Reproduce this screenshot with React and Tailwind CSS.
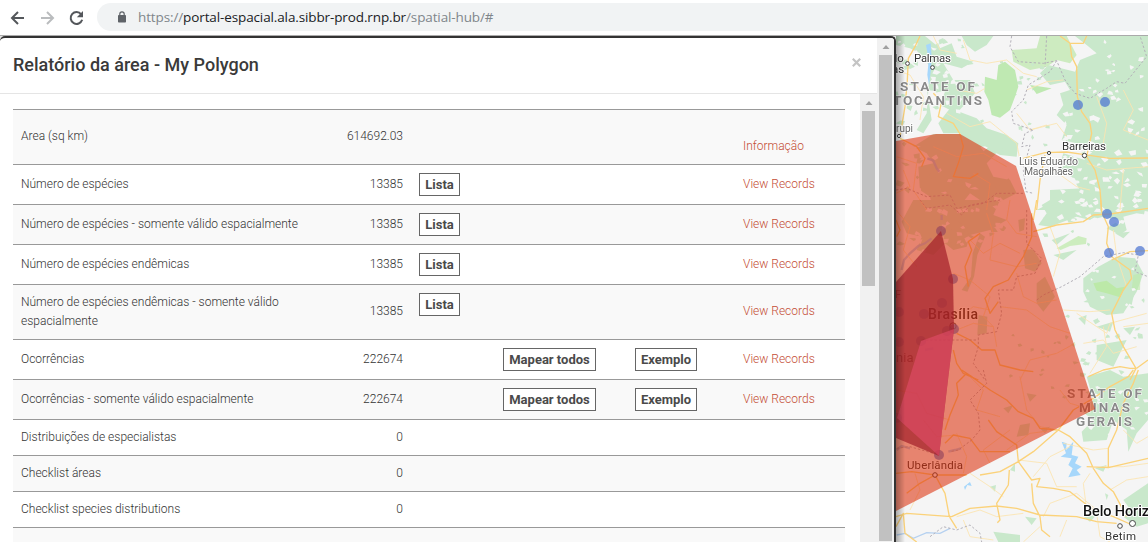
import React from "react";

const rows = [
  { label: "Area (sq km)", value: "614692.03", h: "h-[55px]", link: "Informação", labelPad: "pb-[2px]", valuePad: "pb-[2px]", linkPad: "pt-[19px]", shade: true },
  { label: "Número de espécies", value: "13385", h: "h-[40px]", list: true, link: "View Records" },
  { label: "Número de espécies - somente válido espacialmente", value: "13385", h: "h-[40px]", list: true, link: "View Records", shade: true },
  { label: "Número de espécies endêmicas", value: "13385", h: "h-[40px]", list: true, link: "View Records" },
  { label: "Número de espécies endêmicas - somente válido espacialmente", value: "13385", h: "h-[55px]", list: true, link: "View Records", valuePad: "pb-[2px]", linkPad: "pb-[2px]", shade: true },
  { label: "Ocorrências", value: "222674", h: "h-[40px]", map: true, link: "View Records" },
  { label: "Ocorrências - somente válido espacialmente", value: "222674", h: "h-[40px]", map: true, link: "View Records", shade: true },
  { label: "Distribuições de especialistas", value: "0", h: "h-[36px]" },
  { label: "Checklist áreas", value: "0", h: "h-[36px]", shade: true },
  { label: "Checklist species distributions", value: "0", h: "h-[36px]" },
  { label: "", value: "", h: "h-[36px]", shade: true },
];

function Btn({ children, className }) {
  return (
    <button className={`mt-[8px] h-[23px] shrink-0 self-start border border-[#666] bg-white text-center text-[13px] leading-[21px] font-bold whitespace-nowrap text-[#4a4a4a] ${className}`}>
      {children}
    </button>
  );
}

function Row({ row }) {
  return (
    <div className={`flex shrink-0 items-center border-t border-[#999] text-[12px] leading-[19px] font-light text-[#333] ${row.h} ${row.shade ? "bg-[#f9f9f9]" : "bg-white"}`}>
      <div className={`w-[302px] shrink-0 pr-[16px] pl-[8px] ${row.labelPad || ""}`}>{row.label}</div>
      <div className={`w-[88px] shrink-0 text-right ${row.valuePad || ""}`}>{row.value}</div>
      <div className="flex w-[100px] shrink-0 self-stretch pl-[16px]">
        {row.list && <Btn className="w-[41px]">Lista</Btn>}
      </div>
      <div className="flex w-[132px] shrink-0 self-stretch">
        {row.map && <Btn className="w-[93px]">Mapear todos</Btn>}
      </div>
      <div className="flex w-[108px] shrink-0 self-stretch">
        {row.map && <Btn className="w-[62px]">Exemplo</Btn>}
      </div>
      <div className={`whitespace-nowrap text-[#c44d34] ${row.linkPad || ""}`}>{row.link}</div>
    </div>
  );
}

function Arrow() {
  return (
    <svg width="8" height="4" viewBox="0 0 8 4" className="shrink-0">
      <path d="M0.5 4 L4 0 L7.5 4 Z" fill="#a0a0a0" />
    </svg>
  );
}

function random(seed) {
  let s = seed;
  return () => {
    s = (s * 16807) % 2147483647;
    return s / 2147483647;
  };
}

// Scatters small irregular patches of vegetation or clearing inside a box.
function shards(seed, n, x, y, w, h, size) {
  const r = random(seed);
  let d = "";
  for (let i = 0; i < n; i++) {
    const cx = x + r() * w;
    const cy = y + r() * h;
    const a = r() * 6.28;
    const pts = [0, 1.5, 2.8, 4.3].map((t) => {
      const q = size * (0.35 + r());
      return `${(cx + Math.cos(a + t) * q).toFixed(1)} ${(cy + Math.sin(a + t) * q * 0.75).toFixed(1)}`;
    });
    d += `M${pts.join("L")}Z`;
  }
  return d;
}

const NORTH = "translate(890 30) scale(0.33333)";
const MID = "translate(890 200) scale(0.33333)";
const SOUTH = "translate(890 370) scale(0.33333)";

function Place({ x, y, r = 1.9 }) {
  return <circle cx={x} cy={y} r={r} fill="#fff" stroke="#444" strokeWidth="1" />;
}

function MapView() {
  return (
    <svg className="block h-[506px] w-[252px]" viewBox="896 36 252 506" fontFamily="Roboto, sans-serif">
      <defs>
        <linearGradient id="edge" x1="0" x2="1">
          <stop offset="0" stopColor="#000" stopOpacity="0.3" />
          <stop offset="1" stopColor="#000" stopOpacity="0" />
        </linearGradient>
      </defs>
      <rect x="896" y="36" width="252" height="506" fill="#f5f5f5" />

      <g fill="#c9e8cb">
        <g transform={NORTH}>
          <path d="M18 18H105L150 55L185 40L200 80L250 95L215 115L160 100L190 150L240 150L255 190L200 250L150 225L165 185L110 175L125 270L100 310L80 300L110 250L120 110L90 70L60 55L18 45Z" />
          <path d="M215 18H310L290 45L255 65L230 45Z" />
          <path d="M555 18H774V540H650L615 500L570 480L545 440L505 420L520 370L585 390L560 340L515 330L530 285L500 255L520 225L510 190L540 180L525 155L480 165L450 130L475 105L555 125L570 90L620 70L590 45Z" />
          <path d="M450 18H530L560 75L540 100L500 90L470 110L420 120L370 95L365 60L440 55Z" fill="#cdebc0" />
          <path d="M180 235L260 265L290 295L350 315L385 340L380 380L330 375L270 345L210 310L160 310L145 280Z" />
          <path d="M130 312H220L320 368L290 400L310 440L360 450L380 490L300 530L240 490L200 540L130 540L120 500L90 480L85 410L130 400L110 370L70 350Z" />
          <path d="M480 480L580 475L620 500L570 540H440L480 520Z" />
        </g>
        <g transform={MID}>
          <path d="M480 0H774V45L740 40L700 50L710 90L690 105L650 85L690 60L640 50L600 60L560 50L480 80L445 75L470 40L455 15Z" />
          <path d="M580 235L625 200L680 170L735 175L760 220L740 275L700 340L650 345L600 320L580 275Z" />
          <path d="M70 0H330L310 45L350 60L300 90L240 105L230 140L190 150L165 130L130 165L80 150L95 110L50 100L35 65Z" />
          <path d="M270 100L285 110L262 165L252 230L232 275L215 270L243 230L248 160Z" />
          <path d="M400 150L430 148L455 190L435 215L405 205Z" />
          <path d="M440 250L465 230L495 290L460 335L440 310Z" />
          <path d="M265 345L292 350L290 400L262 405Z" />
          <path d="M385 60L405 55L402 90L388 95Z" />
          <path d="M700 300L735 270L725 315Z M620 435L710 420L690 460L670 500L620 480Z" />
          <path d="M620 380L670 365L660 395Z M700 385L735 380L720 405Z M565 355L590 345L585 375Z" />
          <path d="M485 120L540 100L500 135Z M490 165L560 150L520 180Z M675 100L720 95L700 115Z" />
        </g>
        <g transform={SOUTH}>
          <path d="M590 20L660 0L700 20L774 10V150L740 190L715 245L710 180L670 150L650 210L580 215L575 185L610 150L570 120L610 90Z" />
          <path d="M340 115L370 105L355 130Z M390 165L420 160L415 195L380 200Z M410 70L440 75L420 95Z" />
          <path d="M700 390L774 340V460L740 470L700 440L715 410Z M405 440L440 445L425 465Z M580 440L620 435L600 455Z M310 485L390 495V516H325Z M300 350L318 345L315 365Z M360 300L375 280L375 305Z M645 370L655 375L650 390Z M615 295L650 285L640 305Z M450 175L480 170L465 190Z" />
        </g>
        <path d={shards(17, 34, 896, 40, 70, 90, 4)} />
        <path d={shards(29, 34, 960, 60, 90, 100, 3)} />
        <path d={shards(41, 30, 900, 140, 110, 110, 4)} />
        <path d={shards(53, 30, 1065, 300, 80, 100, 3.2)} />
        <path d={shards(59, 12, 1010, 330, 60, 60, 2.5)} />
        <path d={shards(67, 14, 1045, 195, 50, 50, 3.5)} />
      </g>
      <g transform={NORTH} fill="#bfe9b2">
        <path d="M285 140L320 150L325 105L345 95L375 120L385 170L375 200L360 240L330 263L305 255L295 210L283 185Z" />
        <path d="M420 165L485 175L440 192Z" />
      </g>
      <g transform={MID} fill="#bce9a8">
        <path d="M500 145L565 108L590 115L588 132L540 138L512 150Z" opacity="0.7" />
        <path d="M610 250L650 242L680 265L705 260L690 292L650 280L620 272Z" />
        <path d="M730 225L752 220L750 270L725 270Z" opacity="0.6" />
      </g>
      <g fill="#f5f5f5">
        <path d={shards(7, 60, 1062, 110, 86, 100, 3.8)} />
        <path d={shards(11, 22, 1075, 42, 70, 60, 3)} />
        <path d={shards(13, 22, 1060, 200, 88, 24, 3.5)} />
        <path d={shards(23, 34, 900, 40, 60, 75, 3.5)} />
        <path d={shards(31, 44, 912, 140, 95, 115, 3.8)} />
        <path d={shards(37, 18, 1090, 380, 58, 55, 3.2)} />
        <path d={shards(43, 9, 1088, 262, 50, 45, 2.6)} />
      </g>

      <g fill="#a6d7fb">
        <path transform={NORTH} d="M122 40L125 85L122 125L117 165L112 135L116 90L108 45Z" />
        <path transform={SOUTH} d="M515 215L530 220L528 240L550 215L545 255L565 260L555 280L575 290L560 300L572 315L535 322L548 295L535 285L545 265L512 260L528 250ZM222 350L240 336L245 348L232 345L225 360Z" />
      </g>
      <g fill="none" stroke="#a6c8ef" strokeWidth="7" opacity="0.8">
        <path transform={NORTH} d="M112 385L130 392L140 415L148 425" />
        <path transform={MID} d="M155 45V60M125 115L105 130L85 138L60 160L42 180L35 210M105 450L130 445" />
        <path transform={SOUTH} d="M20 240L35 228L60 235M175 245L195 240L213 235" />
        <path transform={SOUTH} d="M20 495L45 490L70 505L110 488L150 490L180 475" strokeWidth="4" />
      </g>

      <g fill="none" stroke="#fce4b0" strokeWidth="2.6" strokeLinejoin="round">
        <g transform={NORTH}>
          <path d="M130 18L150 60L200 70M18 120L60 135L100 200L90 270M220 30L240 90L290 100L350 90L400 130L440 140M200 180L260 190L285 175M170 250L240 290L300 275L380 340L390 390M420 300L500 280L530 320M380 250L420 300L470 285M410 180L470 155L520 150M590 400L650 420L774 410M620 200L650 280L640 340M700 180L730 240L700 300L774 330M20 380L80 400L70 480L110 540M130 350L200 380L280 370L350 410M250 430L300 460L290 540M40 420L60 470L18 490M700 420L690 540M490 420L560 470L600 480" />
        </g>
        <g transform={MID}>
          <path d="M18 30L60 80L40 150L80 200M290 40L310 100L300 180L380 200L440 190M360 0L350 60L380 100L440 110M240 120L280 160L330 130L390 160M190 220L240 240L300 290L280 350L310 380M380 220L400 290L440 310L500 300M330 320L410 330L480 380L540 400M210 350L250 320L300 330M200 390L250 370L310 380L320 440M390 540L420 480L500 460L555 430M480 80L510 160L490 230M520 330L600 335L660 330M560 340L650 400L660 370L770 340M580 430L640 420L670 460L740 440M670 90L680 170L710 260M600 520L650 440L640 380M700 380L774 370" />
        </g>
        <g transform={SOUTH}>
          <path d="M18 60L80 70L110 130L180 150M240 20L280 60L260 120L330 140M200 190L230 260L220 310M390 20L410 120L450 170L500 180M510 60L540 100L610 120M100 150L140 200L200 195M300 280L280 240L360 180M350 240L420 190L500 180M240 310L300 350L340 380M60 420L90 360L75 310M200 440L270 420L320 440L400 430M430 320L480 260L540 230M385 270L470 280L500 350L560 350M460 440L480 400L560 370L620 420M520 220L610 240L655 235M590 420L580 340L600 310M640 290L700 290L774 280M700 180L740 220L774 200M220 450L240 500L310 510M400 516L450 470M660 360L710 330L774 320M530 450L510 500M620 430L630 500L660 516" />
        </g>
      </g>
      <g fill="none" stroke="#fbd27a" strokeWidth="4" strokeLinejoin="round">
        <g transform={NORTH}>
          <path d="M90 18L75 50L55 85L52 150L45 230L30 320M130 190L155 215L145 260L190 280L210 312L220 350L205 400L190 440L240 445L265 430M30 325L80 350L105 385L95 410M510 18L540 40L580 40L590 18M540 40L545 80L560 110L562 200L575 245L600 280L605 310L590 380L615 420L630 480L635 540M440 540L450 450L465 375M400 385L465 368L530 366L583 374L660 385L774 384" />
        </g>
        <g transform={MID}>
          <path d="M440 0L430 60M425 40L425 110L400 170L355 240L310 260L285 295L300 340L325 305M430 95L500 75L580 65L610 45L660 42L774 25M632 0L635 35L655 80L650 130L665 170L720 210L725 235L700 270L665 340L675 390L700 440L738 505L720 540M665 180L720 155L774 152M270 100L235 125L245 150L225 200L235 260M18 60L30 90L20 110M200 400L240 420L275 450L315 450L330 495L390 510L430 515M190 450L200 490L220 520L265 540M740 505L720 505L690 500L640 510L595 530M740 505L774 480" />
        </g>
        <g transform={SOUTH}>
          <path d="M215 0L245 20L300 60L350 90L385 125L430 145L450 175L505 180L550 120L610 85L660 50L715 20L730 0M230 10L200 40L205 75L180 135L165 180M295 150L320 185L380 225L385 275L425 330L450 325L440 350L490 355L540 365L610 420L670 440L720 462M505 180L540 200L590 250L610 295L640 340L670 365L710 440M505 180L430 245L385 275L330 305L270 315M18 440L50 430L185 440L240 415L320 408L380 415L450 435L560 440L620 455L680 460M135 315L165 370L178 440L200 475M358 300L355 345L320 400L330 450L322 458M425 340L430 400L450 440L455 480L480 500M18 310L65 305L135 315L230 315M50 370L90 340L135 315M18 470L40 430L45 490L80 516M165 220L190 195L240 205L270 245L360 245M590 290L655 293L774 265M655 293L655 235L680 180L700 100L730 40L745 0" />
        </g>
      </g>
      <g fill="none" stroke="#b3b0b8" strokeWidth="3" strokeDasharray="7 6">
        <g transform={NORTH}>
          <path d="M365 18L360 50L385 95L460 100L500 92L525 150L555 190L600 205L650 175L680 155L705 160L770 80L750 18M500 92L480 125L415 165L400 210L365 245L370 280L430 300L405 310L395 350L420 345L400 420L408 485L430 490" />
          <path d="M470 18L465 110M18 480L50 475L110 500L180 495L200 535L280 520L320 490L400 490" />
        </g>
        <g transform={MID}>
          <path d="M410 30L410 130L455 175L435 220L380 230L370 270L325 270L335 340L320 395L265 405L265 440L250 490L285 540M95 420H265M440 300L460 285L515 260L570 230L640 170L700 158L745 165L735 215L774 230M90 0L110 25L180 15L215 45L240 15L330 0" />
        </g>
        <g transform={SOUTH}>
          <path d="M280 0L290 40L240 90L265 130L270 180L245 210L205 240L180 245M20 235L60 230L130 250M120 500L160 470L200 480L240 465L270 490L275 516" />
        </g>
      </g>

      <g fill="#333" fontSize="11.500" stroke="#fff" strokeWidth="2" paintOrder="stroke" strokeLinejoin="round">
        <text x="914" y="62" textLength="37">Palmas</text>
        <text x="894.500" y="62">lo</text>
        <text x="892" y="73">as</text>
        <text x="896" y="132" fontSize="10" fill="#666">rupi</text>
        <text x="1062" y="150" textLength="44">Barreiras</text>
        <text x="1019" y="164.500" fontSize="10.500" fill="#666" textLength="59">Luis Eduardo</text>
        <text x="1024" y="174.500" fontSize="10.500" fill="#666" textLength="49">Magalhães</text>
        <text x="907" y="469" textLength="56">Uberlândia</text>
        <text x="928" y="319" fontSize="14" fontWeight="500" textLength="50">Brasília</text>
        <text x="1083" y="516" fontSize="14.500" fontWeight="500" fill="#111" textLength="74">Belo Horizo</text>
        <text x="1105" y="540" textLength="31">Betim</text>
        <text x="889" y="362" fontSize="13" fill="#666" stroke="none">ânia</text>
        <text x="895" y="298" fontSize="11" fill="#666" stroke="none">F</text>
      </g>
      <g fill="#8a8a8a" fontSize="13.500" fontWeight="700" stroke="#fff" strokeWidth="1.200" paintOrder="stroke" strokeLinejoin="round">
        <text x="900" y="91" textLength="75">STATE OF</text>
        <text x="893" y="105" textLength="89">TOCANTINS</text>
        <text x="1067" y="398" textLength="75">STATE OF</text>
        <text x="1079" y="412" textLength="51">MINAS</text>
        <text x="1076" y="426" textLength="56">GERAIS</text>
      </g>
      <Place x={907.500} y={63.500} />
      <Place x={932.500} y={67.500} />
      <Place x={899} y={136} r={1.600} />
      <Place x={1049} y={153} r={1.600} />
      <Place x={1084.500} y={155.500} r={2.200} />
      <Place x={935} y={475} r={2.300} />
      <Place x={953} y={326} r={3.200} />
      <Place x={1120} y={526} r={2.300} />
      <Place x={1132.500} y={523.500} r={3} />

      <g fill="#4d75d2" opacity="0.72">
        <circle cx="1078" cy="105" r="5" />
        <circle cx="1105" cy="102" r="5" />
        <circle cx="1107" cy="214" r="5" />
        <circle cx="1114" cy="222" r="5" />
        <circle cx="1109" cy="253" r="5" />
        <circle cx="1140" cy="251" r="5" />
        <circle cx="941" cy="231" r="5" />
        <circle cx="953" cy="279" r="5" />
        <circle cx="954" cy="329" r="5" />
        <circle cx="939" cy="455" r="5" />
      </g>
      <g fill="#4d75d2" opacity="0.45">
        <circle cx="942" cy="303" r="5" />
        <circle cx="924" cy="314" r="5" />
        <circle cx="947" cy="331" r="5" />
        <circle cx="921" cy="341" r="5" />
        <circle cx="899" cy="312" r="5" />
        <circle cx="899" cy="342" r="5" />
        <circle cx="897" cy="418" r="5" />
      </g>

      <path d="M896 141L936 134H960L1016 166L1095 409L896 511Z" fill="#db2600" fillOpacity="0.55" />
      <path d="M896 282L941 231L953 279L954 329L939 456L896 438Z" fill="#a2202a" fillOpacity="0.7" />
      <path d="M954 329L921 341L897 418L939 456Z" fill="#e14b69" fillOpacity="0.6" />
      <rect x="896" y="36" width="9" height="506" fill="url(#edge)" />
    </svg>
  );
}

export default function App() {
  return (
    <div className="flex h-[542px] w-[1148px] flex-col overflow-hidden bg-white font-['Roboto',sans-serif]">
      <header className="flex h-[36px] shrink-0 border-b border-[#aaa] bg-white">
        <div className="flex w-[97px] shrink-0 items-center pl-[9px]">
          <svg width="80" height="18" viewBox="9 8 80 18" fill="none" strokeWidth="2">
            <path d="M24 17H12M18 11L12 17L18 23" stroke="#54575b" />
            <path d="M41 17H53M47 11L53 17L47 23" stroke="#babcbe" />
            <path d="M81.200 13.300A5.900 5.900 0 1 0 82.200 18.800" stroke="#54575b" />
            <path d="M83 10V16.200H76.800Z" fill="#54575b" />
          </svg>
        </div>
        <div className="mt-[3px] flex h-[28px] flex-1 items-center rounded-l-full bg-[#f1f3f4] pl-[21px]">
          <svg width="8" height="12" viewBox="0 0 8 12" className="mb-[1px] shrink-0">
            <path d="M1.800 5V3A2.200 2.200 0 0 1 6.200 3V5" fill="none" stroke="#5f6368" strokeWidth="1.200" />
            <rect x="0" y="4" width="8" height="7.500" rx="0.800" fill="#5f6368" />
          </svg>
          <div className="ml-[12px] font-['Open_Sans',sans-serif] text-[13.500px] leading-[20px] tracking-[-0.12px] whitespace-nowrap text-[#80868b]">
            https://<span className="text-[#202124]">portal-espacial.ala.sibbr-prod.rnp.br</span>/spatial-hub/#
          </div>
        </div>
      </header>

      <div className="flex h-[506px] bg-[#e4e4e4]">
        <section className="flex h-[506px] w-[896px] shrink-0 overflow-hidden rounded-t-[5px] border-t-2 border-r-2 border-[#333] bg-white">
          <div className="flex w-[877px] shrink-0 flex-col">
            <div className="flex h-[56px] shrink-0 items-center justify-between border-b border-[#e5e5e5] pr-[16px] pl-[13px]">
              <h1 className="pb-[1px] text-[18px] leading-[24px] font-medium text-[#3a3a3a]">Relatório da área - My Polygon</h1>
              <svg width="9" height="9" viewBox="0 0 9 9" className="mb-[6px]">
                <path d="M0.800 0.800L8.200 8.200M8.200 0.800L0.800 8.200" stroke="#c4c4c4" strokeWidth="2.200" />
              </svg>
            </div>
            <div className="flex h-[448px] overflow-hidden">
              <div className="flex w-[860px] shrink-0 flex-col pt-[15px] pr-[15px] pl-[13px]">
                {rows.map((row, i) => (
                  <Row key={i} row={row} />
                ))}
              </div>
              <div className="flex w-[17px] shrink-0 flex-col items-center bg-[#f1f1f1] pt-[7px]">
                <Arrow />
                <div className="mt-[6px] mr-[1px] h-[175px] w-[13px] shrink-0 bg-[#c1c1c1]" />
              </div>
            </div>
          </div>
          <div className="flex w-[17px] shrink-0 flex-col items-center bg-[#f1f1f1] pt-[7px]">
            <Arrow />
            <div className="mt-[6px] mr-[1px] h-[486px] w-[13px] shrink-0 bg-[#c1c1c1]" />
          </div>
        </section>
        <MapView />
      </div>
    </div>
  );
}
